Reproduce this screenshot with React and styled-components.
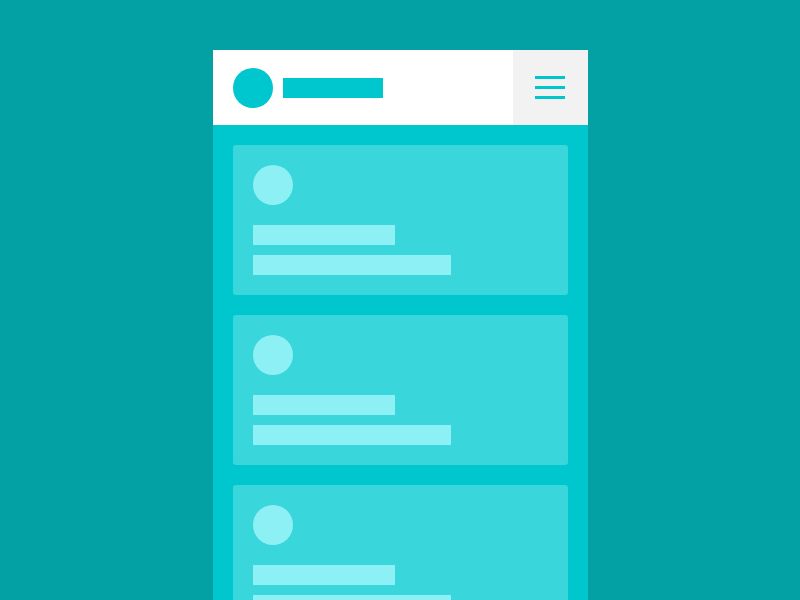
import React from 'react';
import styled, { createGlobalStyle } from 'styled-components';

const GlobalStyle = createGlobalStyle`
    html, body {
        margin: 0;
        padding: 0;
        background: #03a0a4;
        font-family: 'Liberation Sans', Arial, sans-serif;
    }
`;

const Stage = styled.div`
    width: 800px;
    height: 600px;
    overflow: hidden;
    display: flex;
    justify-content: center;
    padding-top: 50px;
    box-sizing: border-box;
`;

const Phone = styled.div`
    width: 375px;
    display: flex;
    flex-flow: column;
    background: #00c6ce;
`;

const Header = styled.header`
    height: 75px;
    flex-shrink: 0;
    display: flex;
    align-items: center;
    background: #ffffff;
    padding-left: 20px;
    gap: 10px;
`;

const Logo = styled.div`
    width: 40px;
    height: 40px;
    border-radius: 50%;
    background: #00c6ce;
`;

const Brand = styled.div`
    width: 100px;
    height: 20px;
    background: #00c6ce;
`;

const MenuButton = styled.button`
    margin-left: auto;
    width: 75px;
    height: 75px;
    border: none;
    padding: 0;
    background: #f2f2f2;
    display: flex;
    flex-flow: column;
    align-items: center;
    justify-content: center;
    gap: 7px;

    span {
        display: block;
        width: 30px;
        height: 3px;
        background: #00c6ce;
    }
`;

const Feed = styled.main`
    padding: 20px;
    display: flex;
    flex-flow: column;
    gap: 20px;
`;

const Card = styled.div`
    height: 150px;
    box-sizing: border-box;
    padding: 20px;
    border-radius: 3px;
    background: #39d6dc;
    display: flex;
    flex-flow: column;
    flex-shrink: 0;
`;

const Avatar = styled.div`
    width: 40px;
    height: 40px;
    flex-shrink: 0;
    border-radius: 50%;
    background: #8cf0f4;
    margin-bottom: 20px;
`;

const Line = styled.div`
    width: ${p => p.width}px;
    height: 20px;
    flex-shrink: 0;
    background: #8cf0f4;

    & + & {
        margin-top: 10px;
    }
`;

const App = () => (
    <>
        <GlobalStyle />
        <Stage>
            <Phone>
                <Header>
                    <Logo />
                    <Brand />
                    <MenuButton>
                        <span />
                        <span />
                        <span />
                    </MenuButton>
                </Header>
                <Feed>
                    {[0, 1, 2].map(i => (
                        <Card key={i}>
                            <Avatar />
                            <Line width={142} />
                            <Line width={198} />
                        </Card>
                    ))}
                </Feed>
            </Phone>
        </Stage>
    </>
);

export default App;
